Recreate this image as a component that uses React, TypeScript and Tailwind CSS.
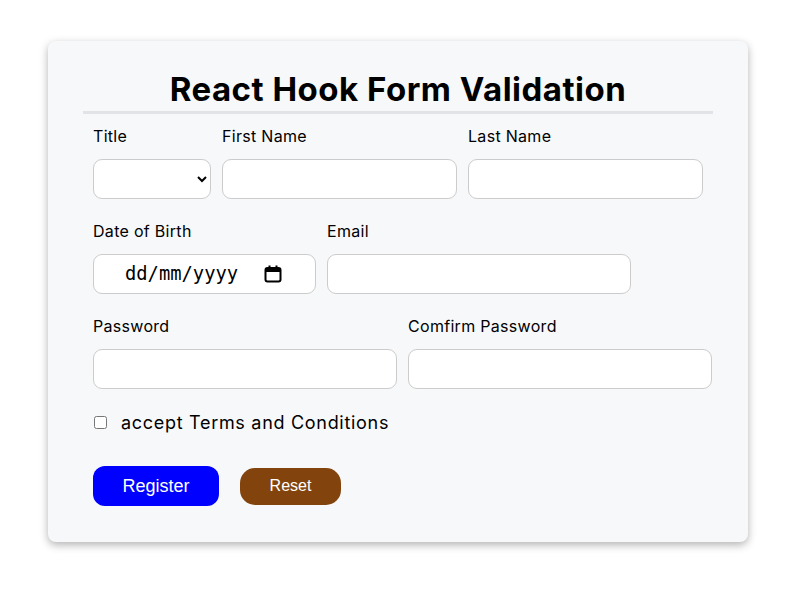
import { useState } from "react";

const font = { fontFamily: "Inter, 'Noto Sans', sans-serif" };

function Field({
  label,
  width,
  children,
}: {
  label: string;
  width: string;
  children: React.ReactNode;
}) {
  return (
    <div className={`flex shrink-0 flex-col ${width}`}>
      <label className="block text-[16px] leading-[24px] tracking-[0.3px] text-black">{label}</label>
      <div className="mt-[11px]">{children}</div>
    </div>
  );
}

const inputClass =
  "w-full h-[40px] rounded-[9px] border border-[#cccccc] bg-white px-3 outline-none";

function CalendarIcon() {
  return (
    <svg width="18" height="18" viewBox="0 0 18 18" className="shrink-0">
      <rect x="1.5" y="3" width="15" height="13.5" rx="2" fill="none" stroke="#000" strokeWidth="2" />
      <rect x="1.5" y="3" width="15" height="4" fill="#000" />
      <rect x="4.5" y="0.5" width="2" height="3.5" fill="#000" />
      <rect x="11.5" y="0.5" width="2" height="3.5" fill="#000" />
    </svg>
  );
}

export default function App() {
  const [accepted, setAccepted] = useState(false);

  return (
    <div className="min-h-[594px] bg-white pt-[41px]" style={font}>
      <div className="ml-[48px] w-[700px] rounded-[8px] bg-[#f7f8fa] pt-[26px] pb-[36px] shadow-[0_3px_8px_rgba(0,0,0,0.3)]">
        <h1 className="mx-[35px] border-b-[3px] border-[#e1e3e6] text-center text-[33px] font-bold leading-[44px] tracking-[0.5px] text-black">
          React Hook Form Validation
        </h1>

        <form className="pl-[45px] pr-[35px] pt-[10px]" onSubmit={(e) => e.preventDefault()}>
          <div className="flex gap-[11px]">
            <Field label="Title" width="w-[118px]">
              <select className={`${inputClass} px-1`}>
                <option value=""></option>
                <option>Mr</option>
                <option>Mrs</option>
                <option>Miss</option>
                <option>Dr</option>
              </select>
            </Field>
            <Field label="First Name" width="w-[235px]">
              <input type="text" className={inputClass} />
            </Field>
            <Field label="Last Name" width="w-[235px]">
              <input type="text" className={inputClass} />
            </Field>
          </div>

          <div className="mt-[20px] flex gap-[11px]">
            <Field label="Date of Birth" width="w-[223px]">
              <div className="flex h-[40px] w-full items-center rounded-[9px] border border-[#cccccc] bg-white pl-[31px] pr-[33px]">
                <input
                  type="text"
                  placeholder="dd/mm/yyyy"
                  className="w-[120px] min-w-0 bg-transparent text-[18.8px] text-black outline-none placeholder:text-black"
                  style={{ fontFamily: "'DejaVu Sans Mono', monospace" }}
                />
                <div className="ml-auto">
                  <CalendarIcon />
                </div>
              </div>
            </Field>
            <Field label="Email" width="w-[304px]">
              <input type="email" className={inputClass} />
            </Field>
          </div>

          <div className="mt-[20px] flex gap-[11px]">
            <Field label="Password" width="w-[304px]">
              <input type="password" className={inputClass} />
            </Field>
            <Field label="Comfirm Password" width="w-[304px]">
              <input type="password" className={inputClass} />
            </Field>
          </div>

          <div className="mt-[21px] flex h-[24px] items-center">
            <input
              type="checkbox"
              checked={accepted}
              onChange={(e) => setAccepted(e.target.checked)}
              className="ml-[1px] h-[13px] w-[13px]"
            />
            <span className="ml-[14px] text-[18px] tracking-[0.7px] text-black">
              accept Terms and Conditions
            </span>
          </div>

          <div className="mt-[32px] flex items-center gap-[21px]">
            <button
              type="submit"
              className="h-[40px] w-[126px] rounded-[12px] bg-[#0000ff] text-[18px] text-white"
              style={{ fontFamily: "'Liberation Sans', Arial, sans-serif" }}
            >
              Register
            </button>
            <button
              type="button"
              className="h-[37px] w-[101px] rounded-[15px] bg-[#82440c] text-[16px] text-white"
              style={{ fontFamily: "'Liberation Sans', Arial, sans-serif" }}
            >
              Reset
            </button>
          </div>
        </form>
      </div>
    </div>
  );
}
